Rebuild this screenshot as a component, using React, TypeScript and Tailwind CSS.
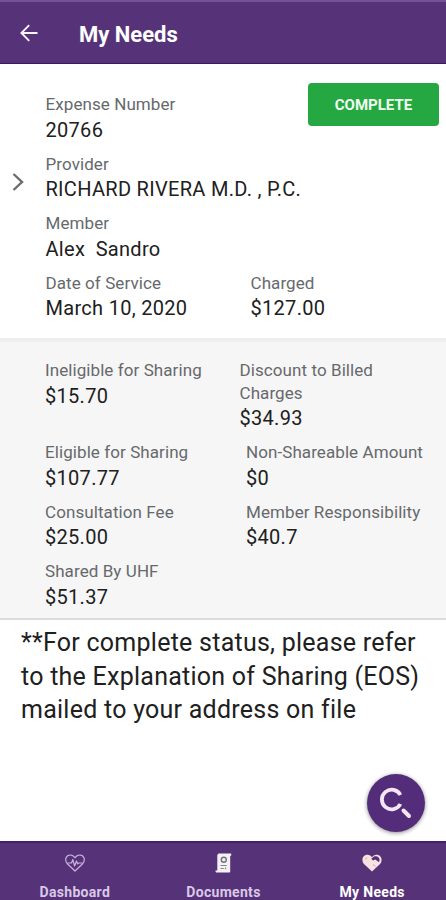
import React from "react"
import clsx from "clsx"

interface FieldProps {
    label: string,
    value: string,
    className?: string,
}

interface TabProps {
    label: string,
    active?: boolean,
    children: React.ReactNode,
}

const Field = ({ label, value, className }: FieldProps) => {
    return (
        <div className={clsx("flex flex-col", className)}>
            <span className="text-[17px] leading-[22.5px] tracking-[0.08px] text-[#66696c]">{label}</span>
            <span className="text-[20px] leading-[28px] tracking-[0.3px] whitespace-pre text-[#202020]">{value}</span>
        </div>
    )
}

const HeartPulseIcon = () => (
    <svg width="20" height="18" viewBox="0 0 20 18" fill="none" stroke="#cbb2de" strokeWidth="1.2" strokeLinejoin="round">
        <path d="M10 17 2.6 10C-1 6 1 1 5.3 1 7.5 1 9 2.2 10 3.8 11 2.2 12.5 1 14.7 1 19 1 21 6 17.4 10Z" />
        <path d="M2.5 9h4l1.3-3.5L9.6 12l1.9-5 1.2 3 .8-1h4" />
    </svg>
)

const DocumentIcon = () => (
    <svg width="18" height="20" viewBox="0 0 18 20">
        <path d="M3.5.5h12.7v2.2h-1v15.8c0 .7-.4 1-1 1H1.8c-1 0-1.3-.6-1.3-2h1.8V2Z" fill="#f6f0f7" />
        <circle cx="8.8" cy="6.8" r="2.5" fill="none" stroke="#77717c" strokeWidth="1.4" />
        <path d="M5.5 12.5h6.3M5.5 15.5h3.3M10.5 14.5v1.7" stroke="#8a848f" strokeWidth="1.2" />
    </svg>
)

const HandshakeHeartIcon = () => (
    <svg width="20" height="18" viewBox="0 0 20 18">
        <path d="M10 17.5 1.7 9.8C-1.2 5.5 1.2.8 5.4.8 7.5.8 9 1.8 10 3.2 11 1.8 12.5.8 14.6.8 18.8.8 21.2 5.5 18.3 9.8Z" fill="#f8e2df" />
        <path d="M9.3 4.8 12 2.6c2.6-1.3 5.4.4 5.6 3.1l-.5 2.5-3.9-2.8-2.2 1.2Z" fill="#563179" />
        <path d="m3.2 5.2 2-1.6M11 10.5l2.5 2" fill="none" stroke="#a58aa6" strokeWidth=".7" />
    </svg>
)

const Tab = ({ label, active, children }: TabProps) => {
    return (
        <div className="flex flex-1 flex-col items-center pl-px">
            <div className="flex h-[22px] shrink-0 items-center justify-center">{children}</div>
            <span className={clsx("mt-[8px] text-[14px] leading-[20px] font-bold tracking-[0.3px]", active ? "text-white" : "text-[#d9c9e6]")}>
                {label}
            </span>
        </div>
    )
}

export default function App() {
    return (
        <div className="flex h-[900px] w-[446px] flex-col overflow-hidden bg-white font-['Roboto',sans-serif]">
            <header className="flex h-[64px] shrink-0 items-center border-t-2 border-b border-t-[#745293] border-b-[#3d1766] bg-[#563379] pl-[20px]">
                <svg width="18" height="18" viewBox="0 0 18 18" fill="none" stroke="#f8f2fa" strokeWidth="1.9">
                    <path d="M17.5 9H1.5M9.2 1.2 1.4 9l7.8 7.8" />
                </svg>
                <h1 className="mt-[4px] ml-[41px] text-[22px] leading-[28px] font-bold text-white">My Needs</h1>
            </header>

            <section className="flex h-[274px] shrink-0 pt-[29px]">
                <div className="w-[45.5px] pt-[80px] pl-[12px]">
                    <svg width="13" height="18" viewBox="0 0 13 18" fill="none" stroke="#6b6b6b" strokeWidth="2.4">
                        <path d="m1.5 1 8.5 8-8.5 8" />
                    </svg>
                </div>
                <div className="flex flex-1 flex-col gap-[9px]">
                    <div className="flex justify-between">
                        <Field label="Expense Number" value="20766" />
                        <button className="-mt-[10px] mr-[7px] h-[43px] w-[131px] rounded-[4px] bg-[#25a842] pt-px text-[15px] font-bold text-[#effff0]">
                            COMPLETE
                        </button>
                    </div>
                    <Field label="Provider" value="RICHARD RIVERA M.D. , P.C." />
                    <Field label="Member" value="Alex  Sandro" />
                    <div className="flex">
                        <Field label="Date of Service" value="March 10, 2020" className="w-[205px]" />
                        <Field label="Charged" value="$127.00" />
                    </div>
                </div>
            </section>

            <section className="flex h-[282px] shrink-0 flex-col gap-[9px] border-t-4 border-b-2 border-t-[#efefef] border-b-[#dcdcdc] bg-[#f6f6f6] pt-[17px] pl-[45px]">
                <div className="flex">
                    <Field label="Ineligible for Sharing" value="$15.70" className="w-[194.5px]" />
                    <Field label="Discount to Billed Charges" value="$34.93" className="w-[160px]" />
                </div>
                <div className="flex">
                    <Field label="Eligible for Sharing" value="$107.77" className="w-[201px]" />
                    <Field label="Non-Shareable Amount" value="$0" />
                </div>
                <div className="flex">
                    <Field label="Consultation Fee" value="$25.00" className="w-[201px]" />
                    <Field label="Member Responsibility" value="$40.7" />
                </div>
                <Field label="Shared By UHF" value="$51.37" />
            </section>

            <main className="flex flex-1 flex-col justify-between pt-[6px] pl-[21px]">
                <p className="text-[25px] leading-[33.5px] tracking-[0.25px] whitespace-nowrap text-[#202020]">
                    **For complete status, please refer<br />
                    to the Explanation of Sharing (EOS)<br />
                    mailed to your address on file
                </p>
                <button aria-label="Search" className="mr-[21px] mb-[9px] flex size-[58px] items-center justify-center self-end rounded-full bg-[#532d7a] shadow-[0_1px_4px_rgba(0,0,0,0.45)]">
                    <svg width="34" height="34" viewBox="0 0 34 34" fill="none" stroke="#f6e5f5">
                        <path d="M21.4 9A9.8 9.8 0 1 0 21.4 18" strokeWidth="3.8" />
                        <path d="m24.5 24.5 5.5 5.5" strokeWidth="4" strokeLinecap="round" />
                    </svg>
                </button>
            </main>

            <nav className="flex h-[59px] shrink-0 border-t-2 border-[#452069] bg-[#563379] pt-[9px]">
                <Tab label="Dashboard"><HeartPulseIcon /></Tab>
                <Tab label="Documents"><DocumentIcon /></Tab>
                <Tab label="My Needs" active><HandshakeHeartIcon /></Tab>
            </nav>
        </div>
    )
}
